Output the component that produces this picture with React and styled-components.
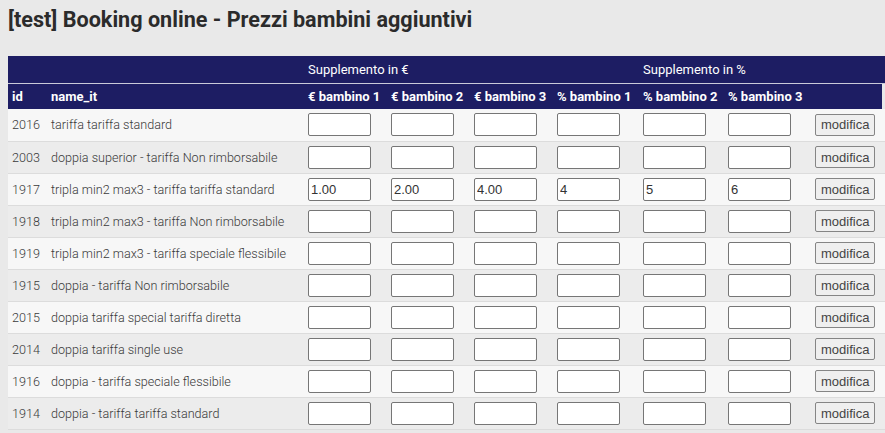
import React from 'react'
import styled, { createGlobalStyle } from 'styled-components'

const GlobalStyle = createGlobalStyle`
  html, body {
    margin: 0;
    background: #e9e9e9;
    overflow: hidden;
  }
  body {
    padding: 8px;
    font-family: Roboto, "Liberation Sans", sans-serif;
    color: #333;
  }
`

const Title = styled.h1`
  font-size: 21.6px;
  font-weight: bold;
  color: #2b2b2b;
  margin: 0 0 25px 0;
  line-height: 23px;
`

const Table = styled.table`
  border-collapse: collapse;
  table-layout: fixed;
  width: 900px;
  font-size: 13px;
`

const GroupRow = styled.tr`
  background: #1d1d63;
  color: #fff;
  height: 27px;
  border-bottom: 1px solid #c9c9d9;
`

const HeadRow = styled.tr`
  height: 26px;
  color: #fff;
`

const Th = styled.th`
  background: ${p => (p.$blank ? 'transparent' : '#1d1d63')};
  font-weight: ${p => (p.$light ? 'normal' : 'bold')};
  text-align: left;
  padding: 0 4px;
  white-space: nowrap;
`

const Row = styled.tr`
  height: 32px;
  background: ${p => (p.$odd ? '#ececec' : '#f7f7f7')};
  border-bottom: 1px solid #dcdcdc;
`

const Td = styled.td`
  padding: 0 4px;
  white-space: nowrap;
  overflow: hidden;
  font-size: 12.6px;
  font-weight: 300;
  color: #3a3a3a;
`

const Field = styled.input`
  box-sizing: border-box;
  width: 63px;
  height: 23px;
  border: 1px solid #767676;
  border-radius: 2px;
  background: #fff;
  font-family: "Liberation Sans", Arial, sans-serif;
  font-size: 13px;
  color: #333;
  padding: 0 2px;
  display: block;
`

const Button = styled.button`
  height: 22px;
  padding: 0 5px;
  border: 1px solid #858585;
  border-radius: 2px;
  background: #efefef;
  font-family: "Liberation Sans", Arial, sans-serif;
  font-size: 13px;
  color: #444;
  display: block;
`

const widths = [39, 257, 83, 83, 83, 86, 85, 87, 71, 26]

const rows = [
  ['2016', 'tariffa tariffa standard'],
  ['2003', 'doppia superior - tariffa Non rimborsabile'],
  ['1917', 'tripla min2 max3 - tariffa tariffa standard', ['1.00', '2.00', '4.00', '4', '5', '6']],
  ['1918', 'tripla min2 max3 - tariffa Non rimborsabile'],
  ['1919', 'tripla min2 max3 - tariffa speciale flessibile'],
  ['1915', 'doppia - tariffa Non rimborsabile'],
  ['2015', 'doppia tariffa special tariffa diretta'],
  ['2014', 'doppia tariffa single use'],
  ['1916', 'doppia - tariffa speciale flessibile'],
  ['1914', 'doppia - tariffa tariffa standard'],
]

const heads = ['€ bambino 1', '€ bambino 2', '€ bambino 3', '% bambino 1', '% bambino 2', '% bambino 3']

export default function App () {
  return <>
    <GlobalStyle />
    <Title>[test] Booking online - Prezzi bambini aggiuntivi</Title>
    <Table>
      <colgroup>
        {widths.map((w, i) => <col key={i} style={{ width: w }} />)}
      </colgroup>
      <thead>
        <GroupRow>
          <Th colSpan={2} />
          <Th $light colSpan={3}>Supplemento in €</Th>
          <Th />
          <Th $light colSpan={4}>Supplemento in %</Th>
        </GroupRow>
        <HeadRow>
          <Th>id</Th>
          <Th>name_it</Th>
          {heads.map(h => <Th key={h}>{h}</Th>)}
          <Th />
          <Th $blank />
        </HeadRow>
      </thead>
      <tbody>
        {rows.map(([id, name, values], i) => <Row key={id} $odd={i % 2 === 1}>
          <Td>{id}</Td>
          <Td>{name}</Td>
          {heads.map((h, j) => <Td key={h}>
            <Field defaultValue={values ? values[j] : ''} />
          </Td>)}
          <Td><Button>modifica</Button></Td>
          <Td />
        </Row>)}
      </tbody>
    </Table>
  </>
}
